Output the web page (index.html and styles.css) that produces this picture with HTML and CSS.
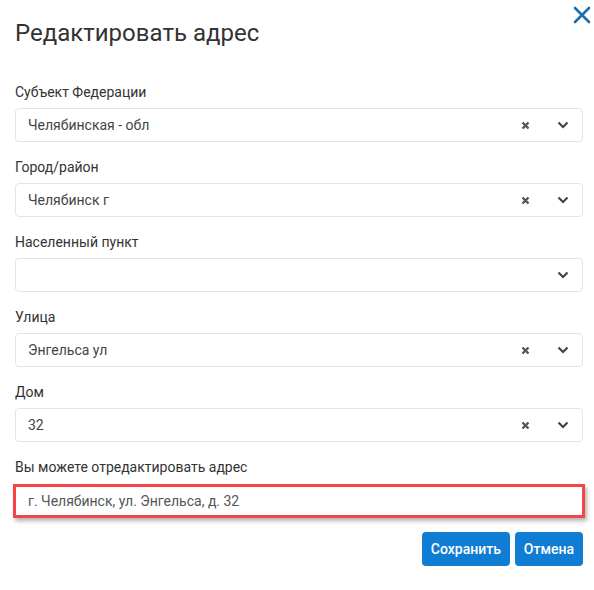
FILE: index.html
```html
<!DOCTYPE html>
<html lang="ru">
<head>
  <meta charset="UTF-8">
  <title>Редактировать адрес</title>
  <link rel="stylesheet" href="styles.css">
</head>
<body>
  <div class="modal">
    <button class="zakryt" aria-label="Закрыть">
      <svg width="18" height="18" viewBox="0 0 18 18"><path d="M2 2L16 16M16 2L2 16" stroke="#1a6fa9" stroke-width="2.6" stroke-linecap="round"/></svg>
    </button>
    <h3>Редактировать адрес</h3>

    <div class="pole">
      <label>Субъект Федерации</label>
      <div class="vybor">
        <span class="znachenie">Челябинская - обл</span>
        <span class="ochistit"><svg width="9" height="9" viewBox="0 0 9 9"><path d="M1.5 1.5L7.5 7.5M7.5 1.5L1.5 7.5" stroke="#555" stroke-width="2.4"/></svg></span>
        <span class="strelka"><svg width="12" height="8" viewBox="0 0 12 8"><path d="M1.5 1.5L6 6L10.5 1.5" fill="none" stroke="#444" stroke-width="2.2"/></svg></span>
      </div>
    </div>

    <div class="pole">
      <label>Город/район</label>
      <div class="vybor">
        <span class="znachenie">Челябинск г</span>
        <span class="ochistit"><svg width="9" height="9" viewBox="0 0 9 9"><path d="M1.5 1.5L7.5 7.5M7.5 1.5L1.5 7.5" stroke="#555" stroke-width="2.4"/></svg></span>
        <span class="strelka"><svg width="12" height="8" viewBox="0 0 12 8"><path d="M1.5 1.5L6 6L10.5 1.5" fill="none" stroke="#444" stroke-width="2.2"/></svg></span>
      </div>
    </div>

    <div class="pole">
      <label>Населенный пункт</label>
      <div class="vybor">
        <span class="znachenie"></span>
        <span class="strelka"><svg width="12" height="8" viewBox="0 0 12 8"><path d="M1.5 1.5L6 6L10.5 1.5" fill="none" stroke="#444" stroke-width="2.2"/></svg></span>
      </div>
    </div>

    <div class="pole">
      <label>Улица</label>
      <div class="vybor">
        <span class="znachenie">Энгельса ул</span>
        <span class="ochistit"><svg width="9" height="9" viewBox="0 0 9 9"><path d="M1.5 1.5L7.5 7.5M7.5 1.5L1.5 7.5" stroke="#555" stroke-width="2.4"/></svg></span>
        <span class="strelka"><svg width="12" height="8" viewBox="0 0 12 8"><path d="M1.5 1.5L6 6L10.5 1.5" fill="none" stroke="#444" stroke-width="2.2"/></svg></span>
      </div>
    </div>

    <div class="pole">
      <label>Дом</label>
      <div class="vybor">
        <span class="znachenie">32</span>
        <span class="ochistit"><svg width="9" height="9" viewBox="0 0 9 9"><path d="M1.5 1.5L7.5 7.5M7.5 1.5L1.5 7.5" stroke="#555" stroke-width="2.4"/></svg></span>
        <span class="strelka"><svg width="12" height="8" viewBox="0 0 12 8"><path d="M1.5 1.5L6 6L10.5 1.5" fill="none" stroke="#444" stroke-width="2.2"/></svg></span>
      </div>
    </div>

    <div class="pole">
      <label class="podpis-adres">Вы можете отредактировать адрес</label>
      <input type="text" class="adres" value="г. Челябинск, ул. Энгельса, д. 32">
    </div>

    <div class="knopki">
      <button class="knopka">Сохранить</button>
      <button class="knopka">Отмена</button>
    </div>
  </div>
</body>
</html>
```

FILE: styles.css
```css
body {
  margin: 0;
  font-family: Roboto, 'Liberation Sans', sans-serif;
  background-color: white;
  color: #333;
}

.modal {
  position: relative;
  padding: 20px 11px 0 15px;
}

.zakryt {
  position: absolute;
  top: 6px;
  right: 3px;
  padding: 0;
  border: none;
  background: none;
  cursor: pointer;
}

h3 {
  margin: 0 0 36px;
  font-size: 24px;
  font-weight: 400;
  line-height: 26px;
  color: #333;
}

.pole {
  margin-bottom: 15px;
}

label {
  display: block;
  font-size: 14px;
  line-height: 20px;
  margin-bottom: 6px;
}

.vybor {
  display: flex;
  align-items: center;
  height: 34px;
  box-sizing: border-box;
  border: 1px solid #e4e4e4;
  border-radius: 4px;
  padding: 0 12px;
  font-size: 14px;
  color: #444;
}

.znachenie {
  flex: 1;
}

.ochistit {
  display: flex;
  margin-right: 27px;
}

.strelka {
  display: flex;
  margin-right: 1px;
}

.podpis-adres {
  margin-bottom: 7px;
}

.adres {
  display: block;
  box-sizing: border-box;
  width: calc(100% + 4px);
  margin-left: -2px;
  height: 34px;
  padding: 0 12px;
  border: 3px solid #f34449;
  font-family: Roboto, 'Liberation Sans', sans-serif;
  font-size: 14px;
  color: #555;
  box-shadow: 2px 3px 4px rgba(0,0,0,0.3);
  outline: none;
}

.knopki {
  display: flex;
  justify-content: flex-end;
  gap: 5px;
  margin-top: -1px;
}

.knopka {
  height: 34px;
  padding: 0 9px;
  border: none;
  border-radius: 4px;
  background-color: #0f7dd3;
  color: white;
  font-family: Roboto, 'Liberation Sans', sans-serif;
  font-size: 14px;
  font-weight: 500;
  cursor: pointer;
}
```
